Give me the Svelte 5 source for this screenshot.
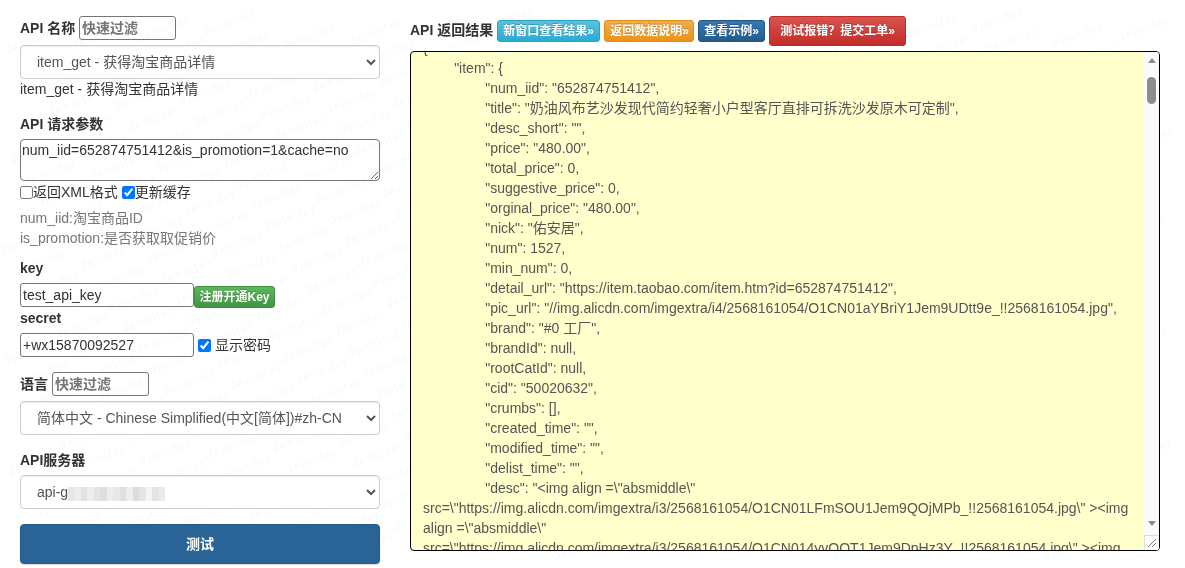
<script lang="ts">
  // faint repeated name behind the page, on a skewed lattice
  const marks: { x: number; y: number }[] = [];
  for (let i = -10; i < 30; i++) {
    for (let j = -5; j < 40; j++) {
      const x = -8 + i * 66 + j * 14;
      const y = 22 - i * 6 + j * 21;
      if (x >= 0 && x + 60 <= 1185 && y >= 20 && y + 16 <= 568) marks.push({ x, y });
    }
  }

  const result = `{
	"item": {
		"num_iid": "652874751412",
		"title": "奶油风布艺沙发现代简约轻奢小户型客厅直排可拆洗沙发原木可定制",
		"desc_short": "",
		"price": "480.00",
		"total_price": 0,
		"suggestive_price": 0,
		"orginal_price": "480.00",
		"nick": "佑安居",
		"num": 1527,
		"min_num": 0,
		"detail_url": "https://item.taobao.com/item.htm?id=652874751412",
		"pic_url": "//img.alicdn.com/imgextra/i4/2568161054/O1CN01aYBriY1Jem9UDtt9e_!!2568161054.jpg",
		"brand": "#0 工厂",
		"brandId": null,
		"rootCatId": null,
		"cid": "50020632",
		"crumbs": [],
		"created_time": "",
		"modified_time": "",
		"delist_time": "",
		"desc": "<img align =\\"absmiddle\\" src=\\"https://img.alicdn.com/imgextra/i3/2568161054/O1CN01LFmSOU1Jem9QOjMPb_!!2568161054.jpg\\" ><img align =\\"absmiddle\\" src=\\"https://img.alicdn.com/imgextra/i3/2568161054/O1CN014yvOQT1Jem9DpHz3Y_!!2568161054.jpg\\" ><img`;

  const blur = [
    "#e6e6e6", "#ececec", "#e2e2e2", "#eeeeee", "#e4e4e4", "#dedede", "#ececec", "#e8e8e8",
    "#e0e0e0", "#ededed", "#dcdcdc", "#e6e6e6", "#f4f4f4", "#e4e4e4", "#ebebeb",
  ];
</script>

<div class="watermark" aria-hidden="true">
  {#each marks as m}
    <span style="left:{m.x}px;top:{m.y}px">Jennifer</span>
  {/each}
</div>

<main class="page">
  <section class="side">
    <div class="filter-row">
      <b class="label-name">API 名称</b>
      <input class="filter" placeholder="快速过滤" />
    </div>
    <select class="control gap-s">
      <option>item_get - 获得淘宝商品详情</option>
    </select>
    <p class="line">item_get - 获得淘宝商品详情</p>

    <b class="line gap-m">API 请求参数</b>
    <textarea class="params gap-s" spellcheck="false">num_iid=652874751412&is_promotion=1&cache=no</textarea>
    <div class="checks">
      <label><input type="checkbox" />返回XML格式</label>
      <label><input type="checkbox" checked />更新缓存</label>
    </div>
    <div class="help">
      <p class="line">num_iid:淘宝商品ID</p>
      <p class="line">is_promotion:是否获取取促销价</p>
    </div>

    <b class="line key-label">key</b>
    <div class="key-row gap-s">
      <input class="text" value="test_api_key" />
      <button class="reg">注册开通Key</button>
    </div>
    <b class="line">secret</b>
    <div class="secret-row gap-s">
      <input class="text" value="+wx15870092527" />
      <label class="show"><input type="checkbox" checked />显示密码</label>
    </div>

    <div class="filter-row gap-m">
      <b class="label-lang">语言</b>
      <input class="filter" placeholder="快速过滤" />
    </div>
    <select class="control gap-s">
      <option>简体中文 - Chinese Simplified(中文[简体])#zh-CN</option>
    </select>

    <b class="line gap-m">API服务器</b>
    <div class="server gap-s">
      <select class="control">
        <option>api-g</option>
      </select>
      <div class="mosaic" aria-hidden="true">
        {#each blur as c}<i style="background:{c}"></i>{/each}
      </div>
    </div>

    <button class="run gap-m">测试</button>
  </section>

  <section class="output">
    <div class="out-head">
      <b class="out-title">API 返回结果</b>
      <a class="btn info">新窗口查看结果»</a>
      <a class="btn warn">返回数据说明»</a>
      <a class="btn prim">查看示例»</a>
      <a class="btn danger">测试报错？提交工单»</a>
    </div>
    <div class="pane">
      <div class="view"><pre>{result}</pre></div>
      <div class="bar" aria-hidden="true">
        <span class="arrow up"></span>
        <div class="track"><span class="thumb"></span></div>
        <span class="arrow down"></span>
        <span class="corner">
          <svg width="12" height="12" viewBox="0 0 12 12">
            <path d="M11 3 3 11M11 7 7 11" stroke="#777" stroke-width="1" fill="none" />
          </svg>
        </span>
      </div>
    </div>
  </section>
</main>

<style>
  :global(body) {
    margin: 0;
    background: #fff;
    color: #333;
    font-family: "Liberation Sans", "Noto Sans CJK SC", sans-serif;
    font-size: 14px;
    line-height: 20px;
    overflow: hidden;
  }

  .watermark {
    position: fixed;
    inset: 0;
    overflow: hidden;
    pointer-events: none;
    color: #f8fafd;
    font-size: 12px;
    font-weight: 700;
    letter-spacing: 1px;
  }

  .watermark span {
    position: absolute;
    line-height: 14px;
    white-space: nowrap;
    transform: rotate(-20deg);
    transform-origin: left center;
  }

  .page {
    position: relative;
    display: grid;
    grid-template-columns: 360px 750px;
    gap: 30px;
    padding: 16px 0 0 20px;
    height: 568px;
    box-sizing: border-box;
  }

  .side {
    display: flex;
    flex-direction: column;
    align-items: stretch;
  }

  .line {
    display: block;
    margin: 0;
    line-height: 20px;
  }

  .gap-s {
    margin-top: 5px;
  }

  .gap-m {
    margin-top: 15px;
  }

  .filter-row {
    display: flex;
    align-items: center;
    height: 24px;
  }

  .label-name {
    width: 59px;
  }

  .label-lang {
    width: 32px;
  }

  .filter {
    width: 97px;
    height: 24px;
    box-sizing: border-box;
    padding: 1px 2px;
    border: 1px solid #767676;
    border-radius: 3px;
    background: transparent;
    font: 700 14px "Liberation Sans", "Noto Sans CJK SC", sans-serif;
  }

  .filter::placeholder {
    color: #757575;
  }

  .control {
    display: block;
    width: 100%;
    height: 34px;
    box-sizing: border-box;
    padding: 6px 12px;
    border: 1px solid #ccc;
    border-radius: 4px;
    background: #fff;
    color: #555;
    font: 14px "Liberation Sans", "Noto Sans CJK SC", sans-serif;
    box-shadow: inset 0 1px 1px rgba(0, 0, 0, 0.075);
  }

  .params {
    display: block;
    width: 360px;
    height: 42px;
    box-sizing: border-box;
    padding: 0 1px;
    border: 1px solid #767676;
    border-radius: 4px;
    background: transparent;
    color: #333;
    font: 14px/20px "Liberation Sans", "Noto Sans CJK SC", sans-serif;
  }

  .checks {
    display: flex;
    gap: 4px;
    height: 20px;
    margin-top: 1px;
  }

  .checks input {
    margin: 0;
    vertical-align: -2px;
  }

  .help {
    margin-top: 6px;
    color: #777;
  }

  .key-label {
    margin-top: 10px;
  }

  .key-row {
    display: flex;
    align-items: flex-start;
    height: 25px;
  }

  .secret-row {
    display: flex;
    align-items: center;
    height: 24px;
  }

  .text {
    width: 174px;
    height: 24px;
    box-sizing: border-box;
    padding: 1px 2px;
    border: 1px solid #767676;
    border-radius: 3px;
    background: transparent;
    color: #333;
    font: 14px "Liberation Sans", "Noto Sans CJK SC", sans-serif;
  }

  .reg {
    width: 81px;
    height: 22px;
    margin-top: 3px;
    padding: 0;
    border: 1px solid #3e8f3e;
    border-radius: 3px;
    background: linear-gradient(#5cb85c, #419641);
    color: #fff;
    font: 700 12px/18px "Liberation Sans", "Noto Sans CJK SC", sans-serif;
    text-shadow: 0 -1px 0 rgba(0, 0, 0, 0.2);
  }

  .show {
    margin-left: 4px;
  }

  .show input {
    margin: 0 4px 0 0;
    vertical-align: -2px;
  }

  .server {
    position: relative;
  }

  .mosaic {
    position: absolute;
    left: 48px;
    top: 12px;
    display: flex;
    width: 97px;
    height: 14px;
  }

  .mosaic i {
    flex: 1;
  }

  .run {
    height: 40px;
    padding: 0 0 2px;
    border: 1px solid #265a88;
    border-radius: 4px;
    background: #2a6496;
    color: #fff;
    font: 700 14px "Liberation Sans", "Noto Sans CJK SC", sans-serif;
    box-shadow: 0 1px 1px rgba(0, 0, 0, 0.15);
  }

  .output {
    display: flex;
    flex-direction: column;
    min-width: 0;
  }

  .out-head {
    display: flex;
    align-items: center;
    gap: 4px;
    height: 30px;
  }

  .out-title {
    position: relative;
    top: -1px;
  }

  .btn {
    display: block;
    height: 22px;
    box-sizing: border-box;
    padding: 0 5px;
    border: 1px solid;
    border-radius: 3px;
    color: #fff;
    font-size: 12px;
    font-weight: 700;
    line-height: 20px;
    white-space: nowrap;
    text-shadow: 0 -1px 0 rgba(0, 0, 0, 0.2);
  }

  .info {
    width: 103px;
    border-color: #28a4c9;
    background: linear-gradient(#5bc0de, #2aabd2);
  }

  .warn {
    width: 90px;
    border-color: #e38d13;
    background: linear-gradient(#f0ad4e, #eb9316);
  }

  .prim {
    width: 67px;
    border-color: #245580;
    background: linear-gradient(#337ab7, #265a88);
  }

  .danger {
    width: 137px;
    height: 30px;
    padding: 0 10px;
    line-height: 28px;
    border-color: #b92c28;
    background: linear-gradient(#d9534f, #c12e2a);
  }

  .pane {
    display: flex;
    height: 500px;
    margin-top: 5px;
    box-sizing: border-box;
    border: 1px solid #000;
    border-radius: 4px;
    overflow: hidden;
    background: #ffc;
  }

  .view {
    flex: 1;
    min-width: 0;
    overflow: hidden;
    padding: 0 12px;
    color: #555;
  }

  .view pre {
    margin: -14px 0 0;
    font: inherit;
    line-height: 20px;
    white-space: pre-wrap;
    word-break: normal;
    tab-size: 8;
  }

  .bar {
    display: flex;
    flex: none;
    flex-direction: column;
    align-items: center;
    width: 15px;
    background: #fafafa;
  }

  .arrow {
    flex: none;
    width: 0;
    height: 0;
    border-right: 4.5px solid transparent;
    border-left: 4.5px solid transparent;
  }

  .up {
    margin-top: 6px;
    border-bottom: 5px solid #8a8a8a;
  }

  .down {
    margin-bottom: 9px;
    border-top: 5px solid #8a8a8a;
  }

  .track {
    flex: 1;
    align-self: stretch;
    padding-top: 14px;
    display: flex;
    flex-direction: column;
    align-items: center;
  }

  .thumb {
    width: 9px;
    height: 27px;
    border-radius: 5px;
    background: #8d8d8d;
  }

  .corner {
    display: block;
    flex: none;
    width: 15px;
    height: 15px;
    border-top: 1px solid #ddd;
    border-left: 1px solid #ddd;
    box-sizing: border-box;
    background: #fff;
    line-height: 0;
  }
</style>
